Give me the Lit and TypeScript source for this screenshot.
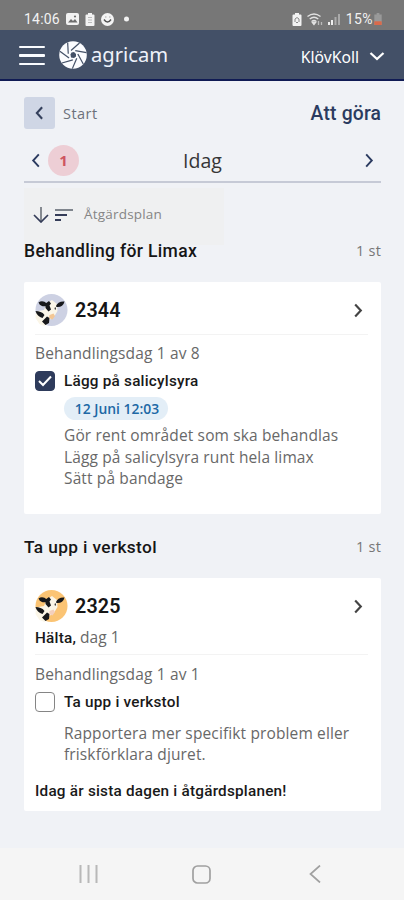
import { LitElement, html, svg, css } from "lit";
import { customElement, property } from "lit/decorators.js";

const chevron = (dir: "left" | "right" | "down", w: number, h: number, stroke = 2) => {
  const d = { left: "M8 1.5 2 8l6 6.5", right: "M2 1.5 8 8l-6 6.5", down: "M1.5 2 8 8l6.5-6" }[dir];
  const box = dir === "down" ? "0 0 16 10" : "0 0 10 16";
  return html`<svg width=${w} height=${h} viewBox=${box} fill="none" stroke="currentColor" stroke-width=${stroke}><path d=${d}></path></svg>`;
};

@customElement("cow-avatar")
class CowAvatar extends LitElement {
  @property() color = "#cdd1e3";
  @property() muzzle = "#f3c795";
  static styles = css`
    :host { display: block; width: 33px; height: 34px; }
    svg { display: block; }
  `;
  render() {
    return html`<svg width="33" height="34" viewBox="0 0 33 34">
      <circle cx="16.500" cy="17" r="16" fill=${this.color}></circle>
      <path d="M1 18.500 9 17l3-7 5-3 5 4 .5 7-3 5-5 4-5 6-5-2-4-6z" fill="#fbf6e8"></path>
      <path d="M3.500 9.500C6 7.500 9.500 8 11.500 10.500L12 13C8.500 14 5 13 3.500 9.500z" fill="#17181b"></path>
      <path d="M10.500 10.500 14 8l2 2.500-1.500 2 1.500 4-2.500 2-3-3.500z" fill="#17181b"></path>
      <path d="M21 13c1-3 4.500-5 8.500-4.500-1 4-4 6-8 5.500z" fill="#17181b"></path>
      <path d="M.5 18c3.500 0 7 1 9 4l-2 3c-3.500-1-6-3.500-7-7zM7 28.500l5-5 2.500 1.500-.5 5-3.500 2z" fill="#17181b"></path>
      <path d="m19.500 15 1-1 .5 2-1 1z" fill="#292827"></path>
      <path d="m14.500 22 4-1.500 1.500 2.500-2.500 3.500-3.500-1.500z" fill=${this.muzzle}></path>
    </svg>`;
  }
}

@customElement("status-bar")
class StatusBar extends LitElement {
  static styles = css`
    :host { display: flex; align-items: center; height: 30px; background: #777; color: #f2f2f2; padding: 8px 22px 0 24px; box-sizing: border-box;
      font: 400 14px/22px Roboto, sans-serif; }
    svg { display: block; flex: none; }
    .time { width: 42px; letter-spacing: .2px; }
    .grow { flex: 1; }
    .left { display: flex; align-items: center; gap: 6px; }
    .right { display: flex; align-items: center; gap: 5px; }
    .level { display: flex; align-items: center; gap: 1px; letter-spacing: .4px; }
  `;
  render() {
    return html`
      <span class="time">14:06</span>
      <div class="left">
        <svg width="13" height="12" viewBox="0 0 13 12"><rect width="13" height="12" rx="2" fill="#f2f2f2"></rect><path d="M2 9.5 5 6l2 2 2-2 2.5 3.500z" fill="#6d6d6d"></path><circle cx="9" cy="3.500" r="1.100" fill="#6d6d6d"></circle></svg>
        <svg width="10" height="13" viewBox="0 0 10 13"><path d="M3 0h4v1.500h1.500q1 0 1 1V12q0 1-1 1h-7q-1 0-1-1V2.500q0-1 1-1H3z" fill="#f2f2f2"></path><path d="M3 4.500h4M3 7h4M3 9.500h4" stroke="#bbb"></path></svg>
        <svg width="13" height="13" viewBox="0 0 13 13"><circle cx="6.500" cy="6.500" r="6.500" fill="#f4f4f4"></circle><path d="M3 6.500q3.500 5 7 0" stroke="#555" stroke-width="1.500" fill="none"></path><path d="M4 4h1.500M8 4h1.500" stroke="#aaa"></path></svg>
        <svg width="13" height="6" viewBox="0 0 13 6"><circle cx="6.500" cy="3" r="2.500" fill="#f2f2f2"></circle></svg>
      </div>
      <div class="grow"></div>
      <div class="right">
        <svg width="10" height="13" viewBox="0 0 10 13"><path d="M3 0h4v1.500h1.500q1 0 1 1V12q0 1-1 1h-7q-1 0-1-1V2.500q0-1 1-1H3z" fill="#f2f2f2"></path><path d="M3 9V6l2-1.500L7 6v3M4 9.500h2" stroke="#888" fill="none"></path></svg>
        <svg width="16" height="13" viewBox="0 0 16 13" fill="none" stroke="#e2e2e2" stroke-width="1.300"><path d="M.5 3.500Q7 -1.500 13.500 3.500M2.700 6Q7 2.500 11.300 6M4.800 8.300Q7 6.700 9.200 8.300"></path><path d="m7 11.500-1.800-2.300h3.600z" fill="#e2e2e2"></path><path d="M11.500 8v4M14.500 12V9" stroke="#bbb"></path></svg>
        <svg width="13" height="12" viewBox="0 0 13 12"><path d="M0 9h2v3H0zM3 7h2v5H3z" fill="#eee"></path><path d="M6.500 4h2v8h-2zM10 1h2v11h-2z" fill="#aaa"></path></svg>
        <div class="level"><span>15%</span>
        <svg width="8" height="12" viewBox="0 0 8 13"><path d="M2.500 0h3v1.500H8V13H0V1.500h2.500z" fill="#999"></path><path d="M0 9h8v4H0z" fill="#d96a4b"></path></svg></div>
      </div>`;
  }
}

@customElement("app-header")
class AppHeader extends LitElement {
  static styles = css`
    :host { display: flex; align-items: center; height: 51px; box-sizing: border-box; padding: 0 19px; background: #435067; border-bottom: 2px solid #101b54; color: #fff; }
    svg { display: block; flex: none; }
    .menu { display: grid; gap: 6px; width: 26px; margin-right: 14px; padding-top: 2px; }
    .menu i { height: 2.500px; border-radius: 1px; background: #fafcff; }
    .logo { display: flex; align-items: center; gap: 4px; flex: 1; }
    .brand { font: 400 20.200px/28px "Noto Sans", sans-serif; color: #eef2fa; padding-bottom: 1px; }
    .product { font: 400 15.700px/22px "Noto Sans", sans-serif; margin-right: 10px; padding-top: 4px; }
    .down { padding-top: 3px; }
  `;
  render() {
    const blades = [0, 1, 2, 3, 4, 5, 6].map(
      (i) => svg`<path d="M12 9.500 20.500 2" stroke="#435067" stroke-width="1.200" transform="rotate(${i * 51.43} 14 14)"></path>`,
    );
    return html`
      <div class="menu"><i></i><i></i><i></i></div>
      <div class="logo">
        <svg width="28" height="28" viewBox="0 0 28 28"><circle cx="14" cy="14" r="13.800" fill="#fbfcff"></circle>${blades}<path d="m12.500 11.500 2.500-.5 2 2 0 2.500-2 1.500-3-.5-.5-3z" fill="#435067"></path></svg>
        <span class="brand">agricam</span>
      </div>
      <span class="product">KlövKoll</span>
      <span class="down">${chevron("down", 16, 10, 2.3)}</span>`;
  }
}

@customElement("app-root")
class AppRoot extends LitElement {
  static styles = css`
    :host { display: flex; flex-direction: column; height: 900px; width: 404px; background: #f0f2f6; overflow: hidden;
      font: 400 15.500px/21px "Open Sans", sans-serif; color: #686868; }
    svg { display: block; flex: none; }
    main { flex: 1; padding: 16px 23px 0 24px; }
    .row { display: flex; align-items: center; }
    .top { height: 32px; }
    .back { display: grid; place-items: center; width: 31px; height: 32px; border-radius: 3px; background: #cfd6e5; color: #34405c; }
    .start { margin-left: 8px; flex: 1; font-size: 14.500px; letter-spacing: .45px; color: #6c717b; }
    .title { font: 500 19.300px/24px Roboto, sans-serif; letter-spacing: .2px; margin-right: -.2px; padding-top: 1px; color: #2b3b60; }
    .days { height: 54px; border-bottom: 2px solid #c6cad6; box-sizing: border-box; padding: 10px 7px 0 7px; color: #2b3b60; }
    .badge { display: grid; place-items: center; width: 31px; height: 31px; border-radius: 50%; margin-left: 7px; background: #edced5; color: #ce5560; font-size: 15px; font-weight: 700; }
    .day { flex: 1; text-align: center; padding-right: 38px; font-size: 19.500px; color: #363636; }
    .sort { width: 200px; height: 57px; margin-top: 5px; box-sizing: border-box; background: #eff0f1; padding: 0 9px 4px; color: #343c58; }
    .sort span { font-size: 13.500px; margin-left: 10px; color: #858585; letter-spacing: .2px; }
    .bars { margin-left: 6px; }
    .group { height: 24px; justify-content: space-between; }
    .group.first { margin-top: -6px; }
    .group h2 { margin: 0; font: 500 17.500px/24px Roboto, sans-serif; letter-spacing: .35px; color: #161616; }
    .group.next { margin-top: 21px; }
    .group.next h2 { font-size: 17.300px; letter-spacing: .38px; }
    .count { font-size: 14.500px; color: #777; letter-spacing: .3px; margin-right: -.3px; padding-bottom: 1px; }
    .card { background: #fff; box-sizing: border-box; padding: 11px 13px 0 11px; border-radius: 2px; }
    .limax { height: 232px; margin-top: 19px; }
    .chair { height: 233px; margin-top: 19px; }
    .head { height: 34px; color: #444; padding-right: 5px; }
    .id { flex: 1; margin-left: 7px; font: 600 19.700px/26px Roboto, sans-serif; letter-spacing: .15px; color: #151515; padding-top: 2px; }
    .rule { height: 1px; background: #f3f3f3; }
    .limax .rule { margin: 7px 0 8px; }
    .chair .rule { margin: 6px 0 9px; }
    .ill { height: 21px; margin-top: 4px; }
    b { font: 500 15.300px/21px Roboto, sans-serif; letter-spacing: .22px; color: #191919; }
    .phase { letter-spacing: .15px; }
    .task { height: 21px; margin-top: 6px; }
    .task b { padding-top: 1px; }
    .box { display: grid; place-items: center; width: 20px; height: 20px; margin-right: 9px; box-sizing: border-box; border: 1px solid #858585; border-radius: 4px; background: #fff; }
    .box.on { background: #2e3b5b; border-color: #2e3b5b; }
    .pill { width: 104px; height: 23px; margin: 6px 0 5px 29px; border-radius: 12px; background: #e3eef7; color: #2068a5; text-align: center; text-indent: 2px; font: 600 13.900px/23px "Open Sans", sans-serif; }
    .text { margin-left: 29px; white-space: nowrap; line-height: 21.500px; letter-spacing: .13px; }
    .chair .text { margin-top: 11px; line-height: 21px; }
    .last { margin-top: 15px; white-space: nowrap; }
    nav { display: flex; align-items: center; height: 52px; padding: 0 83px 0 79px; box-sizing: border-box; background: #f5f5f5; }
    .home { margin: 0 auto 0 94px; }
  `;

  render() {
    return html`
      <status-bar></status-bar>
      <app-header></app-header>
      <main>
        <div class="row top">
          <div class="back">${chevron("left", 9, 14, 2.4)}</div>
          <span class="start">Start</span>
          <span class="title">Att göra</span>
        </div>
        <div class="row days">
          ${chevron("left", 10, 15)}
          <span class="badge">1</span>
          <span class="day">Idag</span>
          ${chevron("right", 10, 15)}
        </div>
        <div class="row sort">
          <svg width="16" height="16" viewBox="0 0 16 16" fill="none" stroke="currentColor" stroke-width="1.700"><path d="M8 0v15" stroke="#737880"></path><path d="m1 8 7 7 7-7"></path></svg>
          <svg class="bars" width="19" height="14" viewBox="0 0 19 14" fill="none" stroke-width="2"><path d="M0 2h18" stroke="#7f858d"></path><path d="M0 7h12M0 12h6" stroke="currentColor"></path></svg>
          <span>Åtgärdsplan</span>
        </div>
        <div class="row group first"><h2>Behandling för Limax</h2><span class="count">1 st</span></div>
        <section class="card limax">
          <div class="row head"><cow-avatar></cow-avatar><span class="id">2344</span>${chevron("right", 10, 15, 2.3)}</div>
          <div class="rule"></div>
          <div class="phase">Behandlingsdag 1 av 8</div>
          <div class="row task">
            <span class="box on"><svg width="14" height="12" viewBox="0 0 14 12" fill="none" stroke="#fff" stroke-width="2"><path d="m1 6 4 4 8-8.500"></path></svg></span>
            <b>Lägg på salicylsyra</b>
          </div>
          <div class="pill">12 Juni 12:03</div>
          <div class="text">Gör rent området som ska behandlas<br />Lägg på salicylsyra runt hela limax<br />Sätt på bandage</div>
        </section>
        <div class="row group next"><h2>Ta upp i verkstol</h2><span class="count">1 st</span></div>
        <section class="card chair">
          <div class="row head"><cow-avatar color="#fbc474" muzzle="#f4d0bd"></cow-avatar><span class="id">2325</span>${chevron("right", 10, 15, 2.3)}</div>
          <div class="ill"><b>Hälta,</b> dag 1</div>
          <div class="rule"></div>
          <div class="phase">Behandlingsdag 1 av 1</div>
          <div class="row task"><span class="box"></span><b>Ta upp i verkstol</b></div>
          <div class="text">Rapportera mer specifikt problem eller<br />friskförklara djuret.</div>
          <div class="last"><b>Idag är sista dagen i åtgärdsplanen!</b></div>
        </section>
      </main>
      <nav>
        <svg width="19" height="18" viewBox="0 0 19 18" stroke="#b8b8b8" stroke-width="2"><path d="M1.500 0v18M9.500 0v18M17.500 0v18"></path></svg>
        <svg class="home" width="19" height="19" viewBox="0 0 19 19" fill="none" stroke="#a0a0a0" stroke-width="1.700"><rect x="1" y="1" width="17" height="17" rx="4.500"></rect></svg>
        <svg width="12" height="18" viewBox="0 0 12 18" fill="none" stroke="#a0a0a0" stroke-width="1.700"><path d="M11 .5 1.500 9l9.500 8.500"></path></svg>
      </nav>`;
  }
}
